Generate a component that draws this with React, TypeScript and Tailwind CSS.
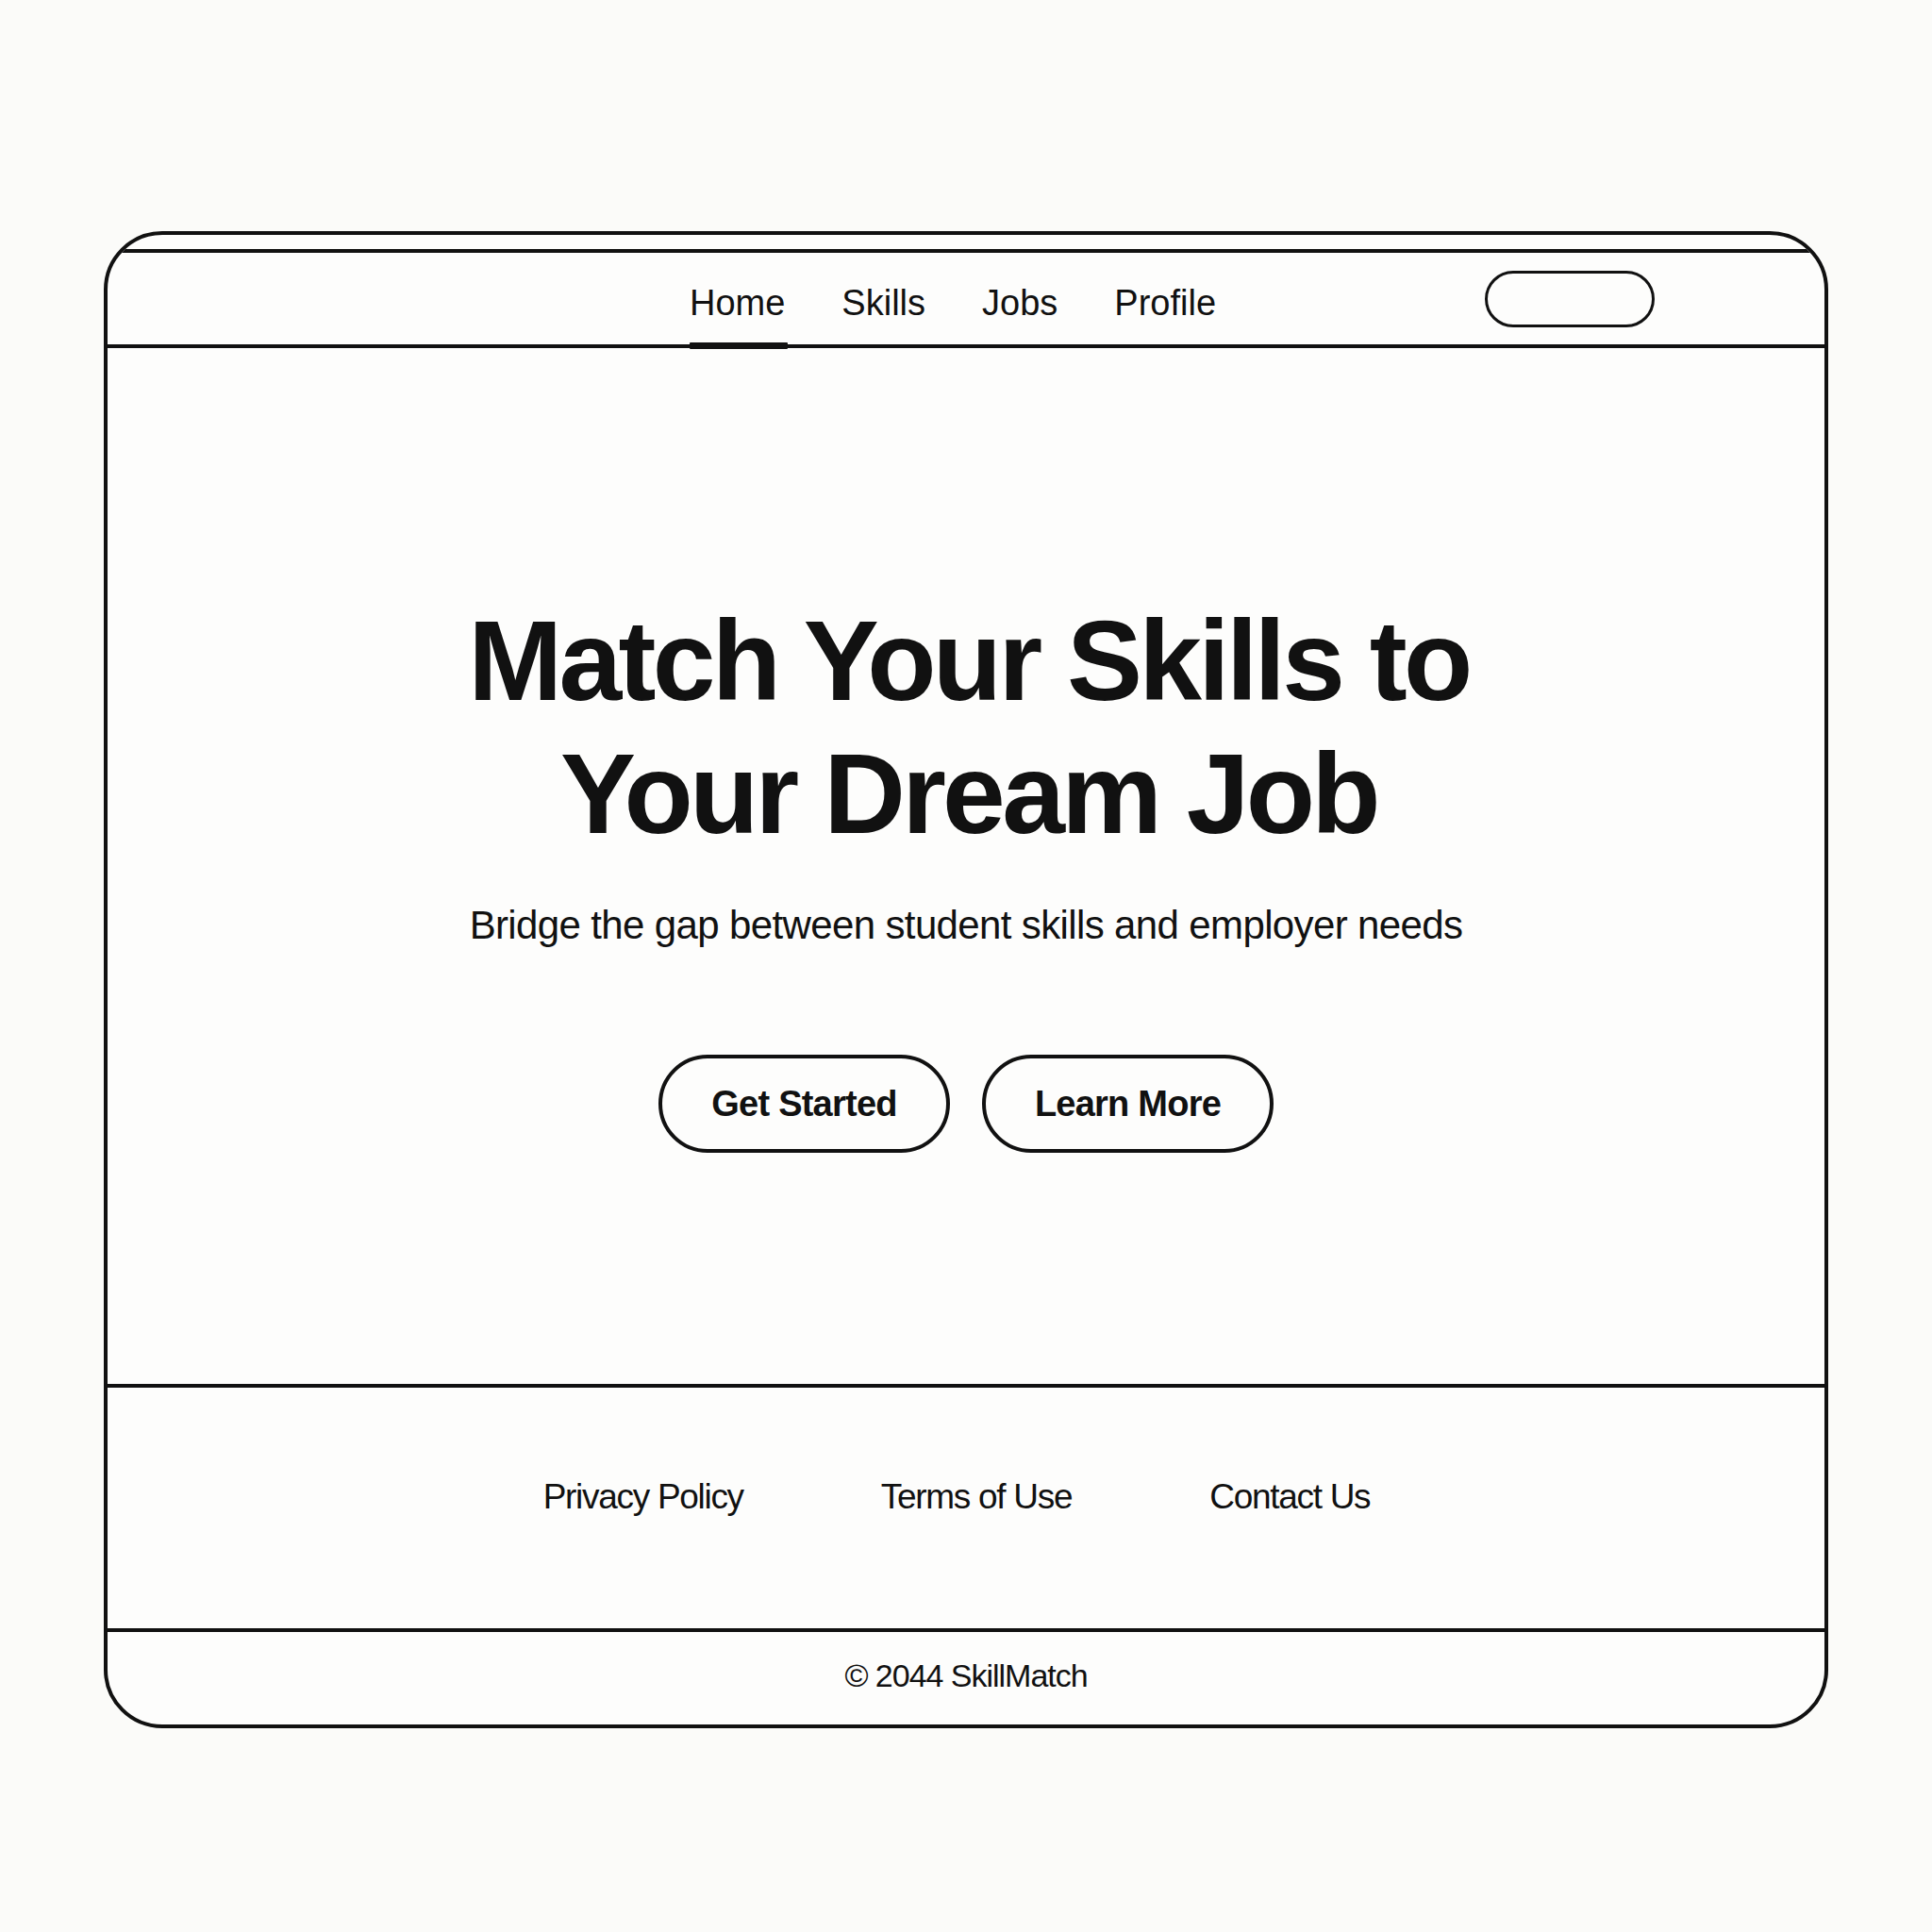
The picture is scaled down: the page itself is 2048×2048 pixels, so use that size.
import React from 'react';

const navLinks = ['Home', 'Skills', 'Jobs', 'Profile'];
const footerLinks = ['Privacy Policy', 'Terms of Use', 'Contact Us'];

const App: React.FC = () => {
  return (
    <div className="w-[2048px] h-[2048px] bg-[#fbfbf9] pt-[245px] font-['Liberation_Sans',Arial,sans-serif] text-[#111]">
      <div className="mx-auto w-[1828px] h-[1587px] rounded-[62px] border-[4px] border-[#111] bg-[#fdfdfc] overflow-hidden flex flex-col">
        {/* thin strip above the nav */}
        <div className="h-[19px] border-b-[4px] border-[#111] shrink-0" />

        {/* nav */}
        <nav className="h-[101px] border-b-[4px] border-[#111] grid grid-cols-[1fr_auto_1fr] shrink-0">
          <div />
          <ul className="flex items-stretch gap-[60px] mr-[28px]">
            {navLinks.map((link) => (
              <li key={link} className="relative flex items-center text-[38px] leading-[44px] pt-[8px]">
                {link}
                {link === 'Home' && (
                  <span className="absolute left-0 right-[-3px] bottom-[-5px] h-[7px] bg-[#111] rounded-[1px]" />
                )}
              </li>
            ))}
          </ul>
          <div className="flex items-center justify-end pr-[180px]">
            <div className="w-[180px] h-[60px] rounded-full border-[3px] border-[#111]" />
          </div>
        </nav>

        {/* hero */}
        <section className="h-[1102px] border-b-[4px] border-[#111] flex flex-col items-center pt-[261px] shrink-0">
          <h1 className="text-[120px] leading-[141px] font-bold tracking-[-0.031em] text-center ml-[6px]">
            Match Your Skills to
            <br />
            Your Dream Job
          </h1>
          <p className="mt-[44px] text-[42px] leading-[50px] tracking-[-0.015em]">
            Bridge the gap between student skills and employer needs
          </p>
          <div className="mt-[112px] flex gap-[34px]">
            <button className="w-[309px] h-[104px] rounded-full border-[4px] border-[#111] bg-transparent text-[38px] font-bold tracking-[-0.02em]">
              Get Started
            </button>
            <button className="w-[309px] h-[104px] rounded-full border-[4px] border-[#111] bg-transparent text-[38px] font-bold tracking-[-0.02em]">
              Learn More
            </button>
          </div>
        </section>

        {/* footer links */}
        <div className="h-[259px] border-b-[4px] border-[#111] flex justify-center pt-[94px] shrink-0">
          <ul className="flex gap-[146px] mr-[20px] h-[44px]">
            {footerLinks.map((link) => (
              <li key={link} className="text-[37px] leading-[44px] tracking-[-0.035em]">
                {link}
              </li>
            ))}
          </ul>
        </div>

        {/* copyright */}
        <div className="flex-1 flex items-center justify-center pb-[7px]">
          <p className="text-[34px] leading-[42px] tracking-[-0.03em]">© 2044 SkillMatch</p>
        </div>
      </div>
    </div>
  );
};

export default App;
